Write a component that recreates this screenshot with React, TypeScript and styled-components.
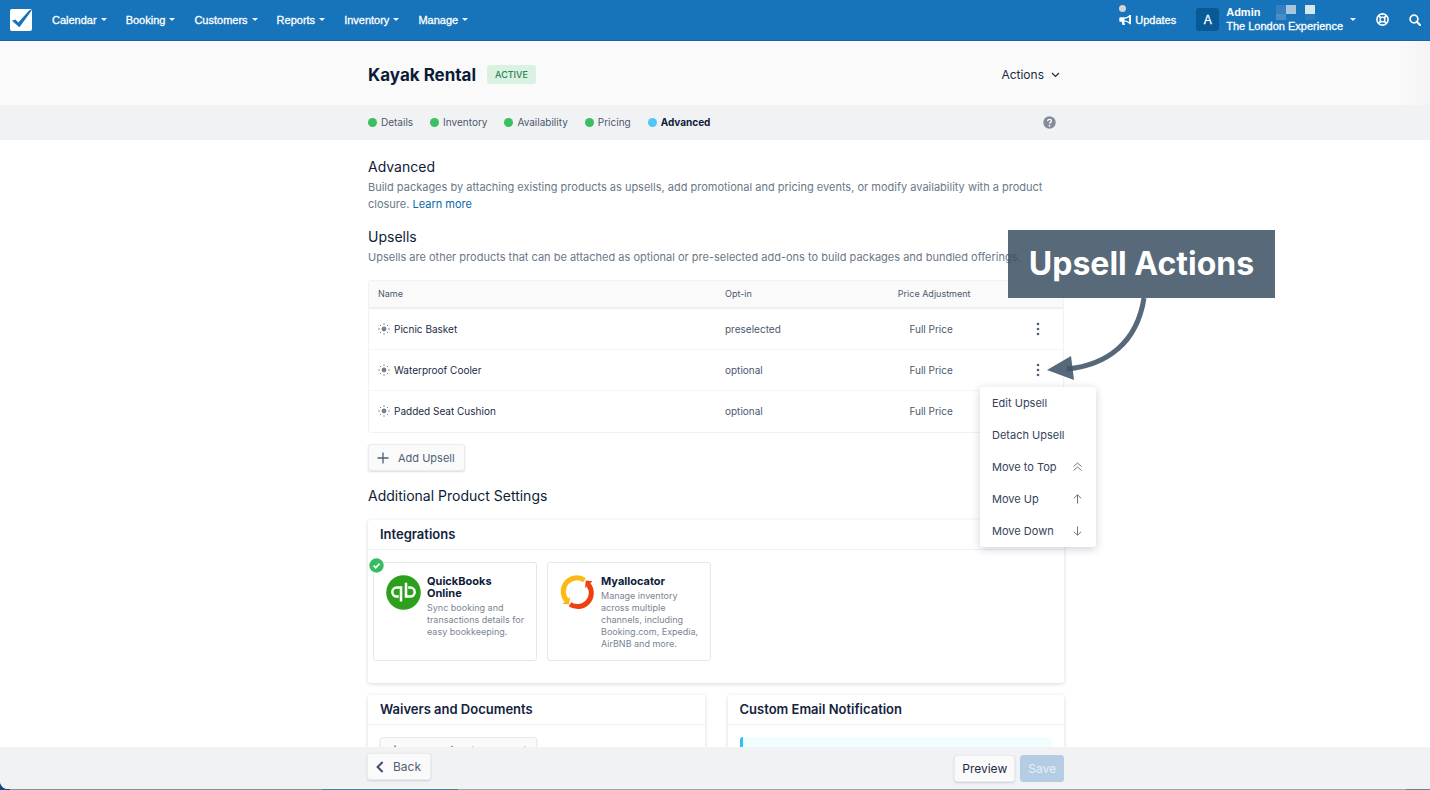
import React from 'react';
import styled, { createGlobalStyle, css } from 'styled-components';

const INTER = "Inter, 'Open Sans', sans-serif";
const HELV = "'Liberation Sans', Arial, sans-serif";

const GlobalStyle = createGlobalStyle`
  *, *::before, *::after { box-sizing: border-box; }
  body { margin: 0; font-family: ${INTER}; color: #1b2b44; background: #fff; }
  h1, h2, h3, h4, p, ul { margin: 0; padding: 0; }
  ul { list-style: none; }
  button { font-family: inherit; cursor: pointer; }
  a { text-decoration: none; }
`;

const Desktop = styled.div`
  height: 100vh;
  padding-bottom: 1px;
  background: linear-gradient(90deg, #17497c 0 10px, #8b9095 10px 322px, #4f7f92 322px 458px, #a3a6a8 458px calc(100% - 24px), #7c7c7c calc(100% - 24px));
`;

const Shell = styled.div`
  display: flex;
  flex-direction: column;
  height: 100%;
  background: #fff;
  border-bottom-left-radius: 8px;
  overflow: hidden;
`;

const TopBar = styled.header`
  flex: none;
  display: flex;
  align-items: center;
  height: 41px;
  padding: 0 9px 1px 10px;
  background: #1773ba;
  border-bottom: 1px solid #1068ab;
  color: #fff;
  font-family: ${HELV};
`;

const HomeLink = styled.a`
  display: flex;
  margin-right: 20px;
`;

const Menus = styled.nav`
  display: flex;
  flex: 1;
  gap: 19px;
`;

const plainButton = css`
  border: 0;
  padding: 0;
  background: none;
  color: inherit;
`;

const NavButton = styled.button`
  ${plainButton}
  display: flex;
  align-items: center;
  gap: 4px;
  font-size: 11px;
  line-height: 16px;
  -webkit-text-stroke: 0.3px currentColor;
`;

const Caret = styled.span`
  border: 3px solid transparent;
  border-top-color: currentColor;
  border-bottom: 0;
`;

const Tools = styled.div`
  display: flex;
  align-items: center;
  gap: 20px;
`;

const UpdatesButton = styled(NavButton)`
  position: relative;
  gap: 3px;
`;

const UpdatesDot = styled.span`
  position: absolute;
  left: 0;
  top: -7px;
  width: 7px;
  height: 7px;
  border-radius: 50%;
  background: #d3d3d6;
`;

const AccountButton = styled(NavButton)`
  gap: 7px;
  text-align: left;
  line-height: 14px;
`;

const Avatar = styled.span`
  display: grid;
  place-items: center;
  width: 23px;
  height: 23px;
  border-radius: 3px;
  background: #075a95;
  font-size: 12px;
`;

const AccountLines = styled.span`
  display: grid;
  padding-bottom: 2px;
`;

const AdminLine = styled.span`
  display: flex;
  gap: 16px;
  height: 14px;
  font-weight: 700;
  -webkit-text-stroke: 0;
`;

const IconButton = styled.button`
  ${plainButton}
  display: flex;
`;

const Container = styled.div`
  width: 100%;
  max-width: 698px;
  margin: 0 auto;
`;

const TitleBand = styled.section`
  flex: none;
  background: linear-gradient(90deg, #fafafa calc(100% - 32px), #f4f4f6);
`;

const TitleRow = styled(Container)`
  display: flex;
  align-items: center;
  height: 64px;
  padding: 3px 4px 0 2px;
`;

const ProductTitle = styled.h1`
  font-size: 17px;
  line-height: 24px;
  font-weight: 700;
  color: #0b1b38;
`;

const StatusTag = styled.span`
  margin-left: 11px;
  padding: 0 8px;
  border-radius: 3px;
  background: #d9f2e1;
  color: #2b8152;
  font-size: 9px;
  line-height: 19px;
  font-weight: 500;
`;

const ActionsButton = styled.button`
  ${plainButton}
  display: flex;
  align-items: center;
  gap: 7px;
  margin-left: auto;
  font-size: 12px;
  line-height: 16px;
`;

const StepBand = styled.section`
  flex: none;
  background: #f1f2f4;
`;

const StepRow = styled(Container)`
  display: flex;
  align-items: center;
  justify-content: space-between;
  height: 35px;
  padding: 0 8px 1px 2px;
`;

const StepList = styled.ul`
  display: flex;
  gap: 17px;
`;

const StepLink = styled.a<{ $current?: boolean }>`
  display: flex;
  align-items: center;
  gap: 4px;
  font-size: 10px;
  line-height: 16px;
  font-weight: ${p => (p.$current ? 700 : 400)};
  color: ${p => (p.$current ? '#0e1c38' : '#4a586d')};

  &::before {
    content: '';
    width: 9px;
    height: 9px;
    border-radius: 50%;
    background: ${p => (p.$current ? '#4fc8f8' : '#3abf61')};
  }
`;

const Scroller = styled.main`
  flex: 1;
  min-height: 0;
  overflow-y: auto;
  scrollbar-width: none;
`;

const Content = styled(Container)`
  padding: 17px 0 40px 2px;
`;

const SectionTitle = styled.h2`
  padding-bottom: 2px;
  font-size: 14px;
  line-height: 20px;
  font-weight: 400;
  color: #0e1c38;
`;

const Lead = styled.p`
  font-size: 11px;
  line-height: 17px;
  color: #6b7788;
  margin-bottom: 14px;

  a { color: #0a68a8; }
`;

const UpsellTable = styled.table`
  width: 100%;
  table-layout: fixed;
  border-collapse: separate;
  border-spacing: 0;
  border: 1px solid #f1f2f4;
  border-radius: 3px;
  font-size: 10px;
  line-height: 16px;

  th, td { text-align: left; padding: 0 9px; }
  th { height: 28px; background: #fafafa; border-bottom: 2px solid #eff0f3; font-size: 9px; font-weight: 400; color: #4a586d; }
  td { height: 41px; border-bottom: 1px solid #f4f5f6; color: #4a586d; }
  tbody tr:last-child td { border-bottom-color: transparent; }
  th:nth-child(3), td:nth-child(3) { text-align: center; }
  th:nth-child(3) { padding-left: 15px; }
  td:nth-child(4) { padding-left: 28px; }
`;

const UpsellName = styled.span`
  display: flex;
  align-items: center;
  gap: 4px;
  color: #1b2b44;
`;

const MoreHolder = styled.div`
  position: relative;
  display: flex;
  justify-content: center;
`;

const ActionMenu = styled.ul`
  position: absolute;
  z-index: 3;
  top: 24px;
  right: -42px;
  width: 116px;
  border-radius: 3px;
  background: #fff;
  box-shadow: 0 2px 8px rgba(30, 40, 80, 0.22);
`;

const ActionItem = styled.button`
  ${plainButton}
  display: flex;
  align-items: center;
  justify-content: space-between;
  width: 100%;
  height: 32px;
  padding: 0 13px 0 12px;
  font-size: 11px;
  color: #34435a;

  svg { color: #6b7788; }
`;

const Callout = styled.aside`
  position: absolute;
  z-index: 4;
  right: -221px;
  top: -133px;
  width: 267px;
`;

const CalloutLabel = styled.strong`
  display: block;
  background: rgba(61, 80, 99, 0.86);
  color: #fff;
  font-size: 32px;
  line-height: 68px;
  font-weight: 700;
  text-align: center;
  white-space: nowrap;
`;

const CalloutArrow = styled.svg`
  position: absolute;
  left: 37px;
  top: 66px;
`;

const SoftButton = styled.button<{ $size?: number }>`
  display: inline-flex;
  align-items: center;
  gap: 9px;
  height: 27px;
  padding: 0 9px 0 8px;
  border: 1px solid #eaebef;
  border-radius: 3px;
  background: #fafafa;
  box-shadow: 0 1px 2px rgba(30, 40, 80, 0.16);
  color: #505f75;
  font-size: ${p => p.$size ?? 11}px;
  line-height: 16px;
`;

const AddRow = styled.div`
  display: flex;
  padding: 11px 0 15px;
`;

const Panel = styled.section`
  border-radius: 3px;
  background: #fff;
  box-shadow: 0 1px 4px rgba(40, 50, 90, 0.18);
`;

const SettingsPanels = styled.div`
  display: grid;
  gap: 12px;
  margin-top: 12px;
`;

const PanelTitle = styled.h3`
  height: 30px;
  padding: 0 12px;
  border-bottom: 1px solid #f0f1f3;
  font-size: 13px;
  line-height: 28px;
  font-weight: 600;
  color: #14233e;
`;

const CardRow = styled.div`
  display: flex;
  gap: 10px;
  padding: 12px 5px 22px;
`;

const Card = styled.article`
  position: relative;
  display: grid;
  grid-template-columns: 35px 1fr;
  align-content: start;
  gap: 6px;
  width: 164px;
  min-height: 99px;
  padding: 12px 5px 10px 12px;
  border: 1px solid #e6e7ea;
  border-radius: 3px;
`;

const CardTitle = styled.h4`
  padding-right: 12px;
  font-size: 11px;
  line-height: 12px;
  font-weight: 700;
  color: #0e1c38;
`;

const CardText = styled.p`
  padding-top: 3px;
  font-size: 9px;
  line-height: 12px;
  color: #7a8594;
`;

const DoneBadge = styled.svg`
  position: absolute;
  left: -5px;
  top: -5px;
`;

const PanelPair = styled.div`
  display: grid;
  grid-template-columns: 1fr 1fr;
  gap: 23px;
`;

const PanelBody = styled.div`
  display: flex;
  padding: 12px;
`;

const Notice = styled.div`
  flex: 1;
  height: 60px;
  border-left: 3px solid #35bdf5;
  border-radius: 3px;
  background: #f2fdff;
`;

const BottomBar = styled.footer`
  flex: none;
  background: #f1f2f4;
`;

const BottomRow = styled(Container)`
  display: flex;
  align-items: flex-start;
  justify-content: space-between;
  height: 42px;
  padding: 6px 0 0 1px;
`;

const SubmitGroup = styled.div`
  display: flex;
  gap: 5px;
  padding-top: 2px;
`;

const FooterButton = styled(SoftButton)<{ $primary?: boolean }>`
  padding: 0 7px;
  color: ${p => (p.$primary ? '#e6eff8' : '#1b2b44')};
  ${p => p.$primary && css`
    background: #b4cde5;
    border-color: #b4cde5;
    box-shadow: none;
  `}
`;

const SunIcon = () => (
  <svg width="12" height="12" viewBox="0 0 12 12" aria-hidden="true">
    <circle cx="6" cy="6" r="2.4" fill="#76808f" />
    <path d="M6 .2v1.6M6 10.2v1.6M.2 6h1.6M10.2 6h1.6M1.9 1.9l1.1 1.1M9 9l1.1 1.1M1.9 10.1L3 9M9 3l1.1-1.1" stroke="#76808f" fill="none" />
  </svg>
);

const DotsIcon = () => (
  <svg width="4" height="14" viewBox="0 0 4 14" fill="#505f75" aria-hidden="true">
    <circle cx="2" cy="2" r="1.3" /><circle cx="2" cy="7" r="1.3" /><circle cx="2" cy="12" r="1.3" />
  </svg>
);

const PlusIcon = () => (
  <svg width="12" height="12" viewBox="0 0 12 12" aria-hidden="true">
    <path d="M6 .5v11M.5 6h11" stroke="currentColor" strokeWidth="1.3" />
  </svg>
);

const moveIcons: Record<string, string> = {
  top: 'M1.5 4.5L5.5 1L9.5 4.5M1.5 8.5L5.5 5L9.5 8.5',
  up: 'M5.5 9.5V1M1.8 4.3L5.5 .8L9.2 4.3',
  down: 'M5.5 .5V9M1.8 5.7L5.5 9.2L9.2 5.7',
};

const MoveIcon = ({ kind }: { kind: string }) => (
  <svg width="11" height="11" viewBox="0 0 11 11" aria-hidden="true">
    <path d={moveIcons[kind]} stroke="currentColor" fill="none" />
  </svg>
);

const menus = ['Calendar', 'Booking', 'Customers', 'Reports', 'Inventory', 'Manage'];
const steps = ['Details', 'Inventory', 'Availability', 'Pricing', 'Advanced'];
const upsells = [
  { name: 'Picnic Basket', optIn: 'preselected' },
  { name: 'Waterproof Cooler', optIn: 'optional', open: true },
  { name: 'Padded Seat Cushion', optIn: 'optional' },
];
const actions = [
  { label: 'Edit Upsell' },
  { label: 'Detach Upsell' },
  { label: 'Move to Top', icon: 'top' },
  { label: 'Move Up', icon: 'up' },
  { label: 'Move Down', icon: 'down' },
];

export default function App() {
  return (
    <Desktop>
      <GlobalStyle />
      <Shell>
        <TopBar>
          <HomeLink href="#" aria-label="Home">
            <svg width="22" height="22" viewBox="0 0 22 22" aria-hidden="true">
              <rect width="22" height="22" rx="2" fill="#fff" />
              <path d="M2 11.8L5.4 10.5L8.3 13.6L19.3 1.2L21.8 .6L20.6 3L9.4 18.2Z" fill="#1773ba" />
            </svg>
          </HomeLink>
          <Menus>
            {menus.map(m => <NavButton key={m}>{m}<Caret /></NavButton>)}
          </Menus>
          <Tools>
            <UpdatesButton>
              <UpdatesDot />
              <svg width="13" height="12" viewBox="0 0 13 12" aria-hidden="true">
                <path d="M1.2 4.2H5.2C7.5 4.2 9.2 3.2 10.8 1.7V9.3C9.2 7.8 7.5 6.9 5.2 6.9H1.2Z" fill="none" stroke="#fff" strokeWidth="1.4" strokeLinejoin="round" />
                <path d="M.6 3.6H5.4V7.5H.6ZM2.6 7H5L6 11H3.4ZM10.4 1H12V10.2H10.4Z" fill="#fff" />
              </svg>
              Updates
            </UpdatesButton>
            <AccountButton>
              <Avatar>A</Avatar>
              <AccountLines>
                <AdminLine>
                  Admin
                  <svg width="40" height="15" viewBox="0 0 40 15" aria-hidden="true">
                    <path d="M0 0h10v9H0z" fill="#3580c0" /><path d="M0 9h10v6H0z" fill="#4a8ec8" />
                    <path d="M10 0h10v9H10z" fill="#a9c5dc" /><path d="M29 0h10v9H29z" fill="#d3e7ef" />
                    <path d="M29 9h10v6H29z" fill="#2a79bb" />
                  </svg>
                </AdminLine>
                The London Experience
              </AccountLines>
              <Caret />
            </AccountButton>
            <IconButton aria-label="Help center">
              <svg width="13" height="13" viewBox="0 0 13 13" fill="none" stroke="#fff" aria-hidden="true">
                <circle cx="6.5" cy="6.5" r="5.6" strokeWidth="1.6" /><circle cx="6.5" cy="6.5" r="2.4" strokeWidth="1.4" />
                <path d="M2.6 2.6l2 2M8.4 8.4l2 2M10.4 2.6l-2 2M4.6 8.4l-2 2" strokeWidth="2" />
              </svg>
            </IconButton>
            <IconButton aria-label="Search">
              <svg width="12" height="12" viewBox="0 0 12 12" fill="none" stroke="#fff" aria-hidden="true">
                <circle cx="5" cy="5" r="3.9" strokeWidth="1.7" /><path d="M7.8 7.8L11 11" strokeWidth="2" strokeLinecap="round" />
              </svg>
            </IconButton>
          </Tools>
        </TopBar>

        <TitleBand>
          <TitleRow>
            <ProductTitle>Kayak Rental</ProductTitle>
            <StatusTag>ACTIVE</StatusTag>
            <ActionsButton>
              Actions
              <svg width="9" height="6" viewBox="0 0 9 6" aria-hidden="true"><path d="M1 1L4.5 4.5L8 1" fill="none" stroke="#1b2b44" strokeWidth="1.2" /></svg>
            </ActionsButton>
          </TitleRow>
        </TitleBand>

        <StepBand>
          <StepRow>
            <StepList>
              {steps.map(s => <li key={s}><StepLink href="#" $current={s === 'Advanced'}>{s}</StepLink></li>)}
            </StepList>
            <IconButton aria-label="Help">
              <svg width="13" height="13" viewBox="0 0 13 13" aria-hidden="true">
                <circle cx="6.5" cy="6.5" r="6.2" fill="#858b98" />
                <path d="M4.7 5.2C4.7 2.8 8.4 2.9 8.4 5.1C8.4 6.4 6.6 6.3 6.6 7.7" fill="none" stroke="#fff" strokeWidth="1.3" />
                <circle cx="6.6" cy="9.7" r=".9" fill="#fff" />
              </svg>
            </IconButton>
          </StepRow>
        </StepBand>

        <Scroller>
          <Content>
            <SectionTitle>Advanced</SectionTitle>
            <Lead>
              Build packages by attaching existing products as upsells, add promotional and pricing events, or modify availability with a product closure. <a href="#">Learn more</a>
            </Lead>
            <SectionTitle>Upsells</SectionTitle>
            <Lead>Upsells are other products that can be attached as optional or pre-selected add-ons to build packages and bundled offerings.</Lead>

            <UpsellTable>
              <colgroup>
                <col width="50%" />
                <col width="22%" />
                <col width="18%" />
                <col />
              </colgroup>
              <thead>
                <tr><th>Name</th><th>Opt-in</th><th>Price Adjustment</th><th aria-label="Actions" /></tr>
              </thead>
              <tbody>
                {upsells.map(u => (
                  <tr key={u.name}>
                    <td><UpsellName><SunIcon />{u.name}</UpsellName></td>
                    <td>{u.optIn}</td>
                    <td>Full Price</td>
                    <td>
                      <MoreHolder>
                        <IconButton aria-label={`Actions for ${u.name}`}><DotsIcon /></IconButton>
                        {u.open && (
                          <>
                            <ActionMenu>
                              {actions.map(a => (
                                <li key={a.label}><ActionItem>{a.label}{a.icon && <MoveIcon kind={a.icon} />}</ActionItem></li>
                              ))}
                            </ActionMenu>
                            <Callout>
                              <CalloutLabel>Upsell Actions</CalloutLabel>
                              <CalloutArrow width="106" height="86" viewBox="0 0 106 86" aria-hidden="true">
                                <path d="M99 2C92 47 62 69 22 73" fill="none" stroke="#56687a" strokeWidth="5" />
                                <path d="M2 74L26 60L29 84Z" fill="#56687a" />
                                <path d="M22 73L27.5 72.3" stroke="#43566a" strokeWidth="5" />
                              </CalloutArrow>
                            </Callout>
                          </>
                        )}
                      </MoreHolder>
                    </td>
                  </tr>
                ))}
              </tbody>
            </UpsellTable>

            <AddRow><SoftButton><PlusIcon />Add Upsell</SoftButton></AddRow>

            <SectionTitle>Additional Product Settings</SectionTitle>
            <SettingsPanels>
              <Panel>
                <PanelTitle>Integrations</PanelTitle>
                <CardRow>
                  <Card>
                    <DoneBadge width="15" height="15" viewBox="0 0 15 15" aria-label="Connected">
                      <circle cx="7.5" cy="7.5" r="7.2" fill="#35bc60" />
                      <path d="M4.6 7.6L6.7 9.7L10.6 5.6" fill="none" stroke="#fff" strokeWidth="1.7" />
                    </DoneBadge>
                    <svg width="35" height="35" viewBox="0 0 35 35" aria-hidden="true">
                      <circle cx="17.5" cy="17.5" r="17.3" fill="#2ca01c" />
                      <path d="M15 26.5V12.6H10.8a4.5 4.5 0 0 0 0 9H12.8M20 7.8V21.6H24.2a4.5 4.5 0 0 0 0-9H22.2" fill="none" stroke="#fff" strokeWidth="2.5" />
                    </svg>
                    <div>
                      <CardTitle>QuickBooks Online</CardTitle>
                      <CardText>Sync booking and transactions details for easy bookkeeping.</CardText>
                    </div>
                  </Card>
                  <Card>
                    <svg width="35" height="35" viewBox="0 0 35 35" fill="none" aria-hidden="true">
                      <path d="M6.6 25.4A13.6 13.6 0 0 1 24.5 5.2" stroke="#fdb913" strokeWidth="5" />
                      <path d="M28.4 9.6A13.6 13.6 0 0 1 10 29.2" stroke="#ee4012" strokeWidth="5" />
                      <path d="M2.5 28.8L9.2 29.6L10 21.8Z" fill="#fdb913" /><path d="M32.5 6.2L25.8 5.6L25 13Z" fill="#ee4012" />
                    </svg>
                    <div>
                      <CardTitle>Myallocator</CardTitle>
                      <CardText>Manage inventory across multiple channels, including Booking.com, Expedia, AirBNB and more.</CardText>
                    </div>
                  </Card>
                </CardRow>
              </Panel>

              <PanelPair>
                <Panel>
                  <PanelTitle>Waivers and Documents</PanelTitle>
                  <PanelBody><SoftButton><PlusIcon />Add Waiver/Document</SoftButton></PanelBody>
                </Panel>
                <Panel>
                  <PanelTitle>Custom Email Notification</PanelTitle>
                  <PanelBody><Notice /></PanelBody>
                </Panel>
              </PanelPair>
            </SettingsPanels>
          </Content>
        </Scroller>

        <BottomBar>
          <BottomRow>
            <SoftButton $size={12}>
              <svg width="8" height="12" viewBox="0 0 8 12" aria-hidden="true"><path d="M6.6 1L1.6 6L6.6 11" fill="none" stroke="#3f4f66" strokeWidth="2" /></svg>
              Back
            </SoftButton>
            <SubmitGroup>
              <FooterButton $size={12}>Preview</FooterButton>
              <FooterButton $size={12} $primary disabled>Save</FooterButton>
            </SubmitGroup>
          </BottomRow>
        </BottomBar>
      </Shell>
    </Desktop>
  );
}
